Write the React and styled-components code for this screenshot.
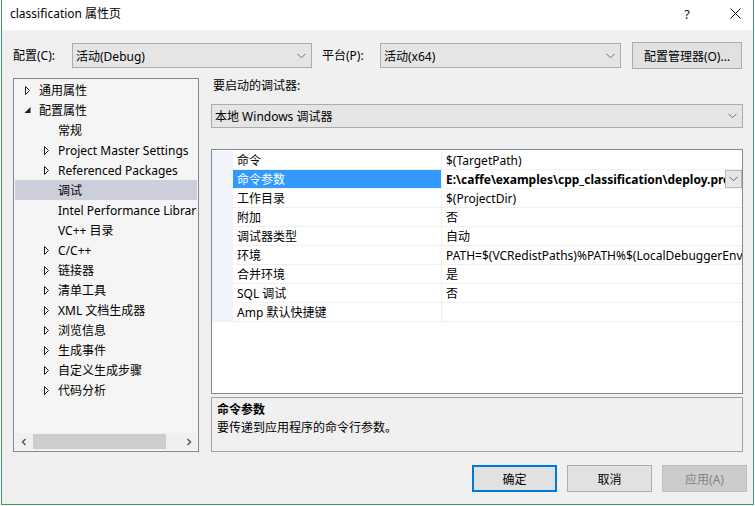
import React from 'react';
import styled, { createGlobalStyle } from 'styled-components';

const GlobalStyle = createGlobalStyle`
  html, body {
    margin: 0;
    padding: 0;
    background: #fff;
  }
  body {
    font-family: "Noto Sans", "Noto Sans CJK SC", sans-serif;
    font-size: 12px;
    color: #000;
  }
`;

const Window = styled.div`
  width: 753px;
  height: 505px;
  margin-left: 1px;
  box-sizing: border-box;
  border: 1px solid #3d9a62;
  border-top: none;
  background: #f0f0f0;
  display: flex;
  flex-direction: column;
  overflow: hidden;
`;

const TitleBar = styled.div`
  height: 30px;
  flex-shrink: 0;
  background: #fff;
  display: flex;
  align-items: center;
  padding: 0 6px 3px 8px;
  box-sizing: border-box;
`;

const Title = styled.div`
  flex: 1;
  line-height: 16px;
`;

const TitleButton = styled.span`
  width: 24px;
  height: 24px;
  display: flex;
  align-items: center;
  justify-content: center;
  font-size: 13px;
  color: #111;
  & + & {
    margin-left: 24px;
  }
`;

const Body = styled.div`
  flex: 1;
  display: flex;
  flex-direction: column;
  padding: 12px 10px 0 11px;
  min-width: 0;
`;

const TopRow = styled.div`
  height: 27px;
  display: flex;
  align-items: center;
`;

const FieldLabel = styled.span`
  width: ${p => p.$w}px;
  margin-left: ${p => p.$ml || 0}px;
  flex-shrink: 0;
  line-height: 16px;
`;

const Combo = styled.div`
  width: ${p => (p.$w ? `${p.$w}px` : 'auto')};
  height: ${p => p.$h || 25}px;
  margin-top: ${p => p.$mt || 0}px;
  box-sizing: border-box;
  border: 1px solid #acacac;
  background: #e5e5e5;
  display: flex;
  align-items: center;
  padding: 0 5px 0 3px;
  flex-shrink: 0;
`;

const ComboText = styled.span`
  flex: 1;
  white-space: nowrap;
  overflow: hidden;
`;

const Button = styled.div`
  width: ${p => p.$w}px;
  height: 27px;
  margin-left: ${p => p.$ml || 0}px;
  box-sizing: border-box;
  border: ${p => (p.$default ? '2px solid #0078d7' : p.$disabled ? '1px solid #bfbfbf' : '1px solid #adadad')};
  background: ${p => (p.$disabled ? '#cccccc' : '#e1e1e1')};
  color: ${p => (p.$disabled ? '#838383' : '#000')};
  display: flex;
  align-items: center;
  justify-content: center;
  flex-shrink: 0;
`;

const Main = styled.div`
  margin-top: 9px;
  height: 374px;
  display: flex;
  gap: 12px;
`;

const Tree = styled.div`
  width: 186px;
  flex-shrink: 0;
  box-sizing: border-box;
  border: 1px solid #828790;
  background: #f5f5f5;
  display: flex;
  flex-direction: column;
`;

const TreeList = styled.div`
  flex: 1;
  padding: 1px 1px 0;
  overflow: hidden;
`;

const TreeRow = styled.div`
  height: 20px;
  display: flex;
  align-items: center;
  padding-left: ${p => 8 + (p.$level - 1) * 19}px;
  background: ${p => (p.$selected ? '#cccedb' : 'transparent')};
  white-space: nowrap;
  overflow: hidden;
`;

const Expander = styled.span`
  width: 16px;
  height: 20px;
  flex-shrink: 0;
  display: flex;
`;

const HScroll = styled.div`
  height: 17px;
  flex-shrink: 0;
  margin: 0 1px 1px;
  background: #f0f0f0;
  display: flex;
  align-items: center;
`;

const ScrollArrow = styled.span`
  width: 17px;
  height: 17px;
  display: flex;
  align-items: center;
  justify-content: center;
`;

const ScrollTrack = styled.div`
  flex: 1;
  height: 15px;
  padding-left: 1px;
  display: flex;
`;

const ScrollThumb = styled.div`
  width: 133px;
  background: #cdcdcd;
`;

const RightPane = styled.div`
  flex: 1;
  min-width: 0;
  display: flex;
  flex-direction: column;
`;

const PaneLabel = styled.div`
  height: 16px;
  line-height: 16px;
  padding-left: 2px;
`;

const Grid = styled.div`
  margin-top: 21px;
  height: 246px;
  box-sizing: border-box;
  border: 1px solid #828790;
  padding-top: 1px;
  background: #fff;
  overflow: hidden;
`;

const GridRow = styled.div`
  height: 19px;
  display: flex;
`;

const Margin = styled.div`
  width: 21px;
  flex-shrink: 0;
  background: #f0f4fa;
`;

const NameCell = styled.div`
  width: 209px;
  flex-shrink: 0;
  box-sizing: border-box;
  border-bottom: 1px solid #f0f0f0;
  border-right: 1px solid #f0f0f0;
  padding-left: 4px;
  display: flex;
  align-items: center;
  background: ${p => (p.$selected ? '#3399ff' : 'transparent')};
  color: ${p => (p.$selected ? '#fff' : '#000')};
  white-space: nowrap;
`;

const ValueCell = styled.div`
  flex: 1;
  min-width: 0;
  box-sizing: border-box;
  border-bottom: 1px solid #f0f0f0;
  padding-left: 4px;
  display: flex;
  align-items: center;
  font-weight: ${p => (p.$bold ? 700 : 400)};
  white-space: nowrap;
  overflow: hidden;
`;

const ValueText = styled.span`
  flex: 1;
  min-width: 0;
  overflow: hidden;
`;

const DropButton = styled.span`
  width: 17px;
  height: 18px;
  box-sizing: border-box;
  flex-shrink: 0;
  border: 1px solid #b9b9b9;
  background: #e6e6e6;
  display: flex;
  align-items: center;
  justify-content: center;
  align-self: flex-start;
`;

const Description = styled.div`
  margin-top: 3px;
  height: 55px;
  box-sizing: border-box;
  border: 1px solid #a0a0a0;
  padding: 3px 5px 0;
  line-height: 18px;
`;

const DescTitle = styled.div`
  font-weight: 700;
`;

const Footer = styled.div`
  margin: 13px -4px 0 0;
  display: flex;
  justify-content: flex-end;
  gap: 10px;
`;

const Chevron = ({ color = '#707070' }) => (
  <svg width="9" height="6" viewBox="0 0 9 6">
    <polyline points="0.5,0.8 4.5,4.8 8.5,0.8" fill="none" stroke={color} strokeWidth="1" />
  </svg>
);

const ExpandIcon = ({ open }) => (
  <svg width="16" height="20" viewBox="0 0 16 20">
    {open ? (
      <polygon points="7.5,7 7.5,13 1.5,13" fill="#1e1e1e" />
    ) : (
      <polygon points="2.5,6.5 6.5,10.5 2.5,14.5" fill="#fafafa" stroke="#1e1e1e" strokeWidth="1" />
    )}
  </svg>
);

const ScrollChevron = ({ dir }) => (
  <svg width="8" height="8" viewBox="0 0 8 8">
    <polyline
      points={dir === 'left' ? '5.5,1 2.5,4 5.5,7' : '2.5,1 5.5,4 2.5,7'}
      fill="none"
      stroke="#606060"
      strokeWidth="1.6"
    />
  </svg>
);

const treeItems = [
  { label: '通用属性', level: 1, arrow: 'closed' },
  { label: '配置属性', level: 1, arrow: 'open' },
  { label: '常规', level: 2 },
  { label: 'Project Master Settings', level: 2, arrow: 'closed' },
  { label: 'Referenced Packages', level: 2, arrow: 'closed' },
  { label: '调试', level: 2, selected: true },
  { label: 'Intel Performance Libraries', level: 2 },
  { label: 'VC++ 目录', level: 2 },
  { label: 'C/C++', level: 2, arrow: 'closed' },
  { label: '链接器', level: 2, arrow: 'closed' },
  { label: '清单工具', level: 2, arrow: 'closed' },
  { label: 'XML 文档生成器', level: 2, arrow: 'closed' },
  { label: '浏览信息', level: 2, arrow: 'closed' },
  { label: '生成事件', level: 2, arrow: 'closed' },
  { label: '自定义生成步骤', level: 2, arrow: 'closed' },
  { label: '代码分析', level: 2, arrow: 'closed' },
];

const properties = [
  { name: '命令', value: '$(TargetPath)' },
  { name: '命令参数', value: 'E:\\caffe\\examples\\cpp_classification\\deploy.prototxt', selected: true },
  { name: '工作目录', value: '$(ProjectDir)' },
  { name: '附加', value: '否' },
  { name: '调试器类型', value: '自动' },
  { name: '环境', value: 'PATH=$(VCRedistPaths)%PATH%$(LocalDebuggerEnvironment)' },
  { name: '合并环境', value: '是' },
  { name: 'SQL 调试', value: '否' },
  { name: 'Amp 默认快捷键', value: '' },
];

export default function App() {
  return (
    <>
      <GlobalStyle />
      <Window>
        <TitleBar>
          <Title>classification 属性页</Title>
          <TitleButton>?</TitleButton>
          <TitleButton>
            <svg width="11" height="11" viewBox="0 0 11 11">
              <path d="M0.5,0.5 L10.5,10.5 M10.5,0.5 L0.5,10.5" stroke="#111" strokeWidth="1" />
            </svg>
          </TitleButton>
        </TitleBar>

        <Body>
          <TopRow>
            <FieldLabel $w={59}>配置(C):</FieldLabel>
            <Combo $w={240}>
              <ComboText>活动(Debug)</ComboText>
              <Chevron />
            </Combo>
            <FieldLabel $w={58} $ml={10}>平台(P):</FieldLabel>
            <Combo $w={241}>
              <ComboText>活动(x64)</ComboText>
              <Chevron />
            </Combo>
            <Button $w={110} $ml={11}>配置管理器(O)...</Button>
          </TopRow>

          <Main>
            <Tree>
              <TreeList>
                {treeItems.map(item => (
                  <TreeRow key={item.label} $level={item.level} $selected={item.selected}>
                    <Expander>{item.arrow && <ExpandIcon open={item.arrow === 'open'} />}</Expander>
                    {item.label}
                  </TreeRow>
                ))}
              </TreeList>
              <HScroll>
                <ScrollArrow><ScrollChevron dir="left" /></ScrollArrow>
                <ScrollTrack><ScrollThumb /></ScrollTrack>
                <ScrollArrow><ScrollChevron dir="right" /></ScrollArrow>
              </HScroll>
            </Tree>

            <RightPane>
              <PaneLabel>要启动的调试器:</PaneLabel>
              <Combo $h={24} $mt={10}>
                <ComboText>本地 Windows 调试器</ComboText>
                <Chevron />
              </Combo>

              <Grid>
                {properties.map(prop => (
                  <GridRow key={prop.name}>
                    <Margin />
                    <NameCell $selected={prop.selected}>{prop.name}</NameCell>
                    <ValueCell $bold={prop.selected}>
                      <ValueText>{prop.value}</ValueText>
                      {prop.selected && (
                        <DropButton><Chevron color="#606060" /></DropButton>
                      )}
                    </ValueCell>
                  </GridRow>
                ))}
              </Grid>

              <Description>
                <DescTitle>命令参数</DescTitle>
                <div>要传递到应用程序的命令行参数。</div>
              </Description>
            </RightPane>
          </Main>

          <Footer>
            <Button $w={85} $default>确定</Button>
            <Button $w={85}>取消</Button>
            <Button $w={85} $disabled>应用(A)</Button>
          </Footer>
        </Body>
      </Window>
    </>
  );
}
